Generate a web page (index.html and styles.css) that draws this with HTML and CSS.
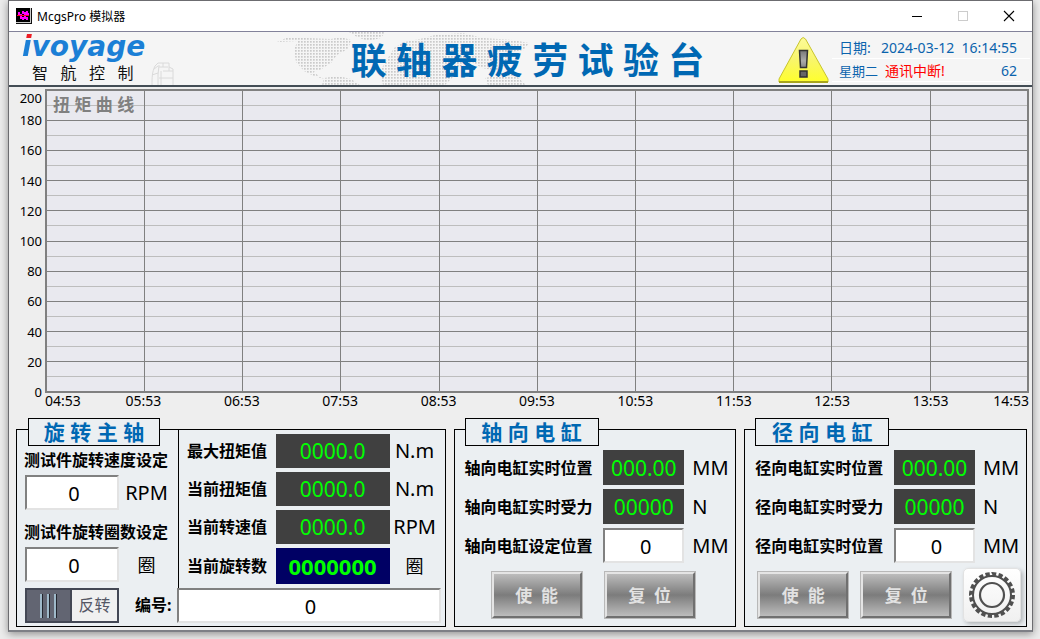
FILE: index.html
```html
<!DOCTYPE html>
<html lang="zh-CN">
<head>
<meta charset="utf-8">
<title>McgsPro 模拟器</title>
<link rel="stylesheet" href="styles.css">
</head>
<body>
<div class="window">
  <div class="titlebar">
    <svg class="app-icon" width="16" height="16" viewBox="0 0 16 16" shape-rendering="crispEdges">
      <rect width="16" height="16" fill="#ccc"/><rect width="14" height="14" x="0" y="0" fill="#000"/>
      <path d="M0 15.500H15.500V0" fill="none" stroke="#111"/>
      <path d="M3 4v3M5 6v5M7 3v3M7 9v3M9 4v7M11 3v4M11 9v3M2 7h2M12 6h1M8 5h2" stroke="#f0f" stroke-width="1.500"/>
      <path d="M1 7.500h12" stroke="#f02" stroke-width="1"/>
    </svg>
    <span class="app-name">McgsPro 模拟器</span>
    <div class="win-controls">
      <button class="win-btn" aria-label="最小化"><svg width="12" height="12"><path d="M1 6.500h10" stroke="#000"/></svg></button>
      <button class="win-btn" aria-label="最大化" disabled><svg width="12" height="12"><rect x="1.500" y="1.500" width="9" height="9" fill="none" stroke="#ccc"/></svg></button>
      <button class="win-btn" aria-label="关闭"><svg width="12" height="12"><path d="M1 1l10 10M11 1L1 11" stroke="#000" stroke-width="1.100"/></svg></button>
    </div>
  </div>

  <header class="header">
    <div class="brand">
      <div class="brand-text">
        <div class="logo"><span class="logo-i">i</span>voyage</div>
        <div class="brand-sub">智&nbsp;&nbsp;&nbsp;航&nbsp;&nbsp;&nbsp;控&nbsp;&nbsp;&nbsp;制</div>
      </div>
      <svg class="sketch" width="24" height="24" viewBox="0 0 24 24" fill="none" stroke="#dadada">
        <path d="M1 24c0-7 0-13 3-19l3-3h11v4l4 2v16M7 24V14l1-10M1 14l6-2M12 2v4M10 10v14M18 6v4M8 6h9M8 17h14M3 8l4-3M12 10h10"/>
      </svg>
    </div>
    <div class="headline">
      <svg class="map" width="254" height="53" viewBox="0 0 254 53">
        <defs><pattern id="dots" width="3" height="3" patternUnits="userSpaceOnUse"><rect width="1.700" height="1.700" fill="#cacaca"/></pattern></defs>
        <g fill="url(#dots)">
          <path d="M0 10l9-4h20l25 1 10-2 10 3-3 9-11 6-6 8-11 7-7 2 11 7-10-3-10-5-8-9-2-13 4-8z"/>
          <path d="M45 53l2-7 14-2 13 3 9 6z"/>
          <path d="M72 0h36l-4 6-13 3-11-4z"/>
          <path d="M106 53l-3-14 8-13 6-10 10-6 16-3 15-4 28-2 20 5 30 2 16 3-5 7-13 2-4 11-9 8-16-3-10-6-16 6-3 9-8 8z"/>
          <path d="M208 46l14-3 14-2 13 12h-38z"/>
        </g>
      </svg>
      <h1 class="title">联 轴 器 疲 劳 试 验 台</h1>
    </div>
    <svg class="warning" width="51" height="48" viewBox="0 0 51 48">
      <defs>
        <linearGradient id="warn" x1="0" y1="0" x2="0" y2="1"><stop offset="0" stop-color="#fdfb9a"/><stop offset=".5" stop-color="#f8f56b"/><stop offset="1" stop-color="#ffff2c"/></linearGradient>
        <linearGradient id="mark" x1="0" y1="0" x2="0" y2="1"><stop offset="0" stop-color="#777"/><stop offset=".6" stop-color="#aaa"/><stop offset="1" stop-color="#888"/></linearGradient>
      </defs>
      <path d="M23 3q2-3 4.500 0L50 43v3H1v-3z" fill="url(#warn)" stroke="#c8c52c"/>
      <path d="M1 46h49" stroke="#a8a51c" stroke-width="2"/>
      <path d="M21.500 14.500h8l-1 17h-6z" fill="url(#mark)" stroke="#333" stroke-width="1.500"/>
      <rect x="22" y="35" width="7" height="6" fill="#666" stroke="#333" stroke-width="1.500"/>
    </svg>
    <div class="status">
      <div class="status-row"><span class="status-label">日期:</span><time>2024-03-12&nbsp; 16:14:55</time></div>
      <div class="status-row"><span class="weekday">星期二</span><span class="alarm">通讯中断!</span><span class="count">62</span></div>
    </div>
  </header>

  <main class="main">
    <section class="chart" aria-label="扭矩曲线">
      <div class="y-axis">
        <span class="y-max">200</span><span>180</span><span>160</span><span>140</span><span>120</span><span>100</span><span>80</span><span>60</span><span>40</span><span>20</span><span>0</span>
      </div>
      <div class="plot">
        <svg class="plot-grid" viewBox="0 0 980 300" preserveAspectRatio="none" shape-rendering="crispEdges">
          <path class="minor" d="M0 14.500H980M0 44.500H980M0 74.500H980M0 104.500H980M0 134.500H980M0 165.500H980M0 195.500H980M0 225.500H980M0 255.500H980M0 285.500H980"/>
          <path class="major" d="M0 29.500H980M0 59.500H980M0 89.500H980M0 119.500H980M0 150.500H980M0 180.500H980M0 210.500H980M0 240.500H980M0 270.500H980M97.500 0V300M195.500 0V300M293.500 0V300M392.500 0V300M490.500 0V300M588.500 0V300M686.500 0V300M784.500 0V300M883.500 0V300"/>
        </svg>
        <h2 class="plot-title">扭 矩 曲 线</h2>
      </div>
      <div class="x-axis">
        <span>04:53</span><span>05:53</span><span>06:53</span><span>07:53</span><span>08:53</span><span>09:53</span><span>10:53</span><span>11:53</span><span>12:53</span><span>13:53</span><span>14:53</span>
      </div>
    </section>

    <div class="panels">
      <section class="panel">
        <div class="spindle">
          <div class="spindle-set">
            <h2 class="panel-title spindle-title">旋 转 主 轴</h2>
            <label class="label" for="speed">测试件旋转速度设定</label>
            <div class="entry"><input class="field" id="speed" value="0"><span class="unit">RPM</span></div>
            <label class="label label-next" for="turns">测试件旋转圈数设定</label>
            <div class="entry"><input class="field" id="turns" value="0"><span class="unit unit-cjk">圈</span></div>
          </div>
          <div class="readings">
            <span class="label">最大扭矩值</span><output class="display">0000.0</output><span class="unit">N.m</span>
            <span class="label">当前扭矩值</span><output class="display">0000.0</output><span class="unit">N.m</span>
            <span class="label">当前转速值</span><output class="display">0000.0</output><span class="unit">RPM</span>
            <span class="label">当前旋转数</span><output class="display display-total">0000000</output><span class="unit unit-cjk">圈</span>
          </div>
        </div>
        <div class="spindle-foot">
          <label class="switch"><input type="checkbox" class="switch-knob"><span class="switch-text">反转</span></label>
          <label class="label number-label" for="number">编号:</label>
          <input class="field number-field" id="number" value="0">
        </div>
      </section>

      <section class="panel">
        <h2 class="panel-title">轴 向 电 缸</h2>
        <div class="cylinder">
          <span class="label">轴向电缸实时位置</span><output class="display">000.00</output><span class="unit">MM</span>
          <span class="label">轴向电缸实时受力</span><output class="display">00000</output><span class="unit">N</span>
          <label class="label" for="axial">轴向电缸设定位置</label><input class="field" id="axial" value="0"><span class="unit">MM</span>
        </div>
        <div class="actions actions-axial">
          <button class="btn">使&nbsp;&nbsp;能</button>
          <button class="btn">复&nbsp;&nbsp;位</button>
        </div>
      </section>

      <section class="panel">
        <h2 class="panel-title">径 向 电 缸</h2>
        <div class="cylinder">
          <span class="label">径向电缸实时位置</span><output class="display">000.00</output><span class="unit">MM</span>
          <span class="label">径向电缸实时受力</span><output class="display">00000</output><span class="unit">N</span>
          <label class="label" for="radial">径向电缸实时位置</label><input class="field" id="radial" value="0"><span class="unit">MM</span>
        </div>
        <div class="actions actions-radial">
          <button class="btn">使&nbsp;&nbsp;能</button>
          <button class="btn">复&nbsp;&nbsp;位</button>
          <button class="gear" aria-label="设置">
            <svg width="48" height="48" viewBox="-24 -24 48 48" fill="none" stroke="#505050">
              <circle r="12" stroke-width="2.200"/>
              <circle r="19" stroke-width="2"/>
              <circle r="21" stroke-width="4" pathLength="200" stroke-dasharray="6.500 3.500"/>
            </svg>
          </button>
        </div>
      </section>
    </div>
  </main>
</div>
</body>
</html>
```
FILE: styles.css
```css
* { box-sizing: border-box; }

body {
  margin: 0;
  padding: 0 7px 7px 8px;
  background: #ececec;
  color: #000;
  font-family: "Noto Sans", "Noto Sans CJK SC", sans-serif;
}

h1, h2 { margin: 0; }
svg { display: block; flex: none; }
button, input { font-family: inherit; }

.window {
  display: flex;
  flex-direction: column;
  min-height: calc(100vh - 7px);
  border: 1px solid #6c6c70;
  border-bottom: 2px solid #7d7f86;
  background: #eee;
  box-shadow: 0 2px 8px rgba(0, 0, 0, .4);
}

/* Title bar */
.titlebar {
  display: flex;
  align-items: center;
  height: 31px;
  padding-left: 7px;
  background: #fff;
  border-bottom: 1px solid #82829a;
}
.app-name { margin-left: 5px; font-size: 12px; }
.win-controls { display: flex; margin-left: auto; align-self: stretch; }
.win-btn {
  display: flex;
  align-items: center;
  justify-content: center;
  width: 46px;
  padding: 0;
  border: 0;
  background: none;
}

/* Header */
.header {
  display: flex;
  min-height: 55px;
  background: #f5f5f5;
  border-bottom: 2px solid #434d55;
}
.brand { display: flex; width: 268px; padding-left: 13px; }
.brand-text { display: flex; flex-direction: column; }
.logo {
  font: italic bold 28px/30px "DejaVu Sans", sans-serif;
  color: #1b7fd6;
}
.logo-i {
  background: linear-gradient(#ec1c24 9px, #1b7fd6 9px);
  background-clip: text;
  -webkit-background-clip: text;
  color: transparent;
}
.brand-sub { padding-left: 10px; font-size: 16px; line-height: 22px; color: #111; }
.sketch { align-self: flex-end; margin-left: 6px; }
.headline { position: relative; flex: 1; }
.map { position: absolute; left: 0; top: 0; }
.title {
  position: relative;
  padding-top: 6px;
  text-align: center;
  font-size: 36px;
  line-height: 46px;
  white-space: nowrap;
  color: #0068b3;
}
.warning { margin-top: 4px; }
.status {
  width: 198px;
  margin: 4px 2px 0 3px;
  font-size: 14px;
  color: #0a63ad;
}
.status-row {
  display: flex;
  align-items: center;
  height: 23px;
  padding: 0 13px 0 7px;
  border-bottom: 1px solid #fff;
}
.status-row time, .count { margin-left: auto; }
.weekday { font-size: 13px; }
.alarm { margin-left: 7px; color: #f00; }

/* Chart */
.main { display: flex; flex: 1; flex-direction: column; padding-top: 2px; }
.chart {
  display: grid;
  flex: 1;
  grid-template-columns: 36px 1fr;
  grid-template-rows: 1fr 15px;
  padding-right: 3px;
}
.y-axis {
  display: flex;
  flex-direction: column;
  justify-content: space-between;
  padding-right: 3px;
  margin: -8px 0;
  text-align: right;
  font-size: 13px;
  line-height: 18px;
}
.y-max { padding-top: 8px; margin-bottom: -8px; }
.plot { position: relative; min-height: 120px; border: 2px solid #808080; background: #e9e9ef; }
.plot-grid { position: absolute; inset: 0; width: 100%; height: 100%; }
.plot-grid path { fill: none; stroke-width: 1; vector-effect: non-scaling-stroke; }
.minor { stroke: #bdbdbd; }
.major { stroke: #808080; }
.plot-title { position: relative; padding: 2px 6px; font-size: 17px; line-height: 24px; color: #808080; }
.x-axis {
  display: grid;
  grid-column: 2;
  grid-template-columns: 1fr repeat(9, 2fr) 1fr;
  justify-items: center;
  font-size: 14px;
  line-height: 15px;
}
.x-axis span:first-child { justify-self: start; }
.x-axis span:last-child { justify-self: end; }

/* Control panels */
.panels {
  display: grid;
  grid-template-columns: 430fr 283fr 283fr;
  gap: 8px;
  padding: 21px 5px 3px 7px;
}
.panel { border: 1px solid #000; background: #ebeff2; }
.panel-title {
  width: 134px;
  margin: -12px 0 0 10px;
  border: 1px solid #000;
  background: #ebeff2;
  text-align: center;
  font-size: 21px;
  line-height: 26px;
  color: #0068b3;
}
.label { font-size: 16px; font-weight: 700; line-height: 24px; white-space: nowrap; }
.unit { font-size: 20px; line-height: 24px; }
.unit-cjk { font-size: 18px; }
.field {
  min-width: 0;
  height: 35px;
  padding: 2px 0 0 4px;
  border: 2px solid;
  border-color: #808080 #e3e3e3 #e3e3e3 #808080;
  background: #fff;
  text-align: center;
  font-size: 20px;
}
.display {
  display: flex;
  align-items: center;
  justify-content: center;
  background: #404040;
  color: #0f0;
  font-size: 21px;
  line-height: 34px;
}
.display-total { background: #000064; font-size: 22px; font-weight: 700; line-height: 36px; }

.spindle { display: flex; }
.spindle-set {
  display: flex;
  flex-direction: column;
  width: 162px;
  padding: 0 8px 6px 7px;
  border-right: 1px solid #000;
}
.spindle-title { width: 132px; margin: -12px 0 2px 4px; }
.label-next { margin-top: 10px; }
.entry { display: flex; align-items: center; margin: 3px 0 0 1px; }
.entry .field { width: 94px; }
.entry .unit { flex: 1; padding-left: 4px; text-align: center; }
.readings {
  display: grid;
  flex: 1;
  grid-template-columns: 1fr 114px 50px;
  align-items: center;
  gap: 4px 0;
  padding: 4px 5px 4px 8px;
}
.readings .unit { text-align: center; }
.spindle-foot { display: flex; padding: 0 4px 3px 8px; }
.switch { display: flex; width: 94px; height: 35px; border: 2px solid #434754; background: #f0f0f0; }
.switch-knob {
  appearance: none;
  width: 45px;
  margin: 0;
  border-right: 2px solid #434754;
  background:
    linear-gradient(90deg, #9fb9c9 2px, #23262e 2px 3px, transparent 3px 7px, #9fb9c9 7px 9px, #23262e 9px 10px, transparent 10px 14px, #9fb9c9 14px 16px, #23262e 16px) center / 17px 24px no-repeat,
    #626572;
}
.switch-text { flex: 1; text-align: center; font-size: 16px; line-height: 30px; color: #555765; }
.number-label { margin-left: auto; padding-right: 5px; line-height: 34px; }
.number-field { width: 264px; }

.cylinder {
  display: grid;
  grid-template-columns: 1fr 81px 43px;
  grid-auto-rows: 35px;
  align-items: center;
  gap: 4px 8px;
  padding: 4px 0 0 10px;
}
.cylinder .display, .cylinder .field { height: 35px; }
.actions { display: flex; align-items: center; height: 55px; margin: 4px 0; }
.actions-axial { gap: 21px; padding-left: 36px; }
.actions-radial { gap: 11px; padding-left: 12px; }
.btn {
  width: 92px;
  height: 48px;
  padding: 0;
  border: 3px solid;
  border-color: #e4e4e4 #707070 #707070 #e4e4e4;
  outline: 1px solid #b8b8b8;
  outline-offset: -1px;
  background: linear-gradient(#bcbcbc, #7c7c7c 50%, #bcbcbc);
  color: #e2e2e2;
  font-size: 17px;
  font-weight: 700;
}
.gear {
  display: flex;
  align-items: center;
  justify-content: center;
  width: 58px;
  height: 54px;
  padding: 0;
  border: 1px solid #e2e2e2;
  border-radius: 5px;
  background: linear-gradient(#fff, #f0f0f0);
  box-shadow: 2px 2px 4px rgba(0, 0, 0, .25);
}
```
